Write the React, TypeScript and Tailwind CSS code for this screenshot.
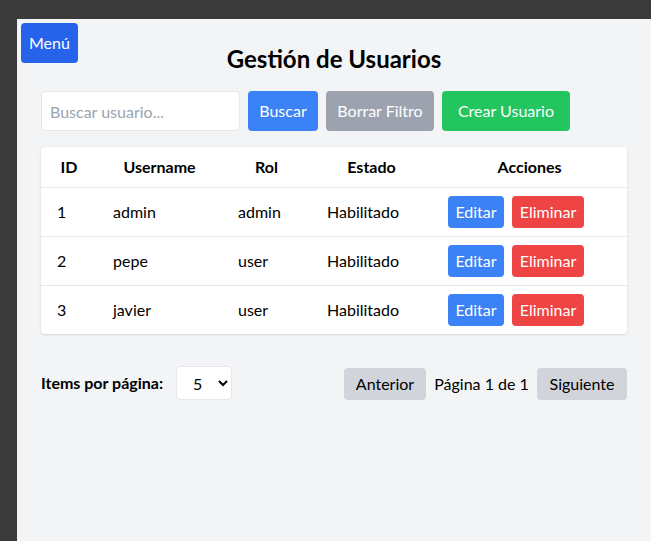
import React from "react";

const users = [
  { id: 1, username: "admin", rol: "admin", estado: "Habilitado" },
  { id: 2, username: "pepe", rol: "user", estado: "Habilitado" },
  { id: 3, username: "javier", rol: "user", estado: "Habilitado" },
];

export default function App() {
  return (
    <div
      className="w-[651px] h-[541px] bg-[#3a3a3a] pt-[19px] pl-[17px] overflow-hidden"
      style={{ fontFamily: "Lato, 'Liberation Sans', sans-serif" }}
    >
      <div className="relative w-full h-full bg-[#f3f4f6] p-6 text-black">
        <button className="absolute top-[4px] left-[4px] bg-[#2563eb] text-white px-2 py-2 rounded text-base leading-6">
          Menú
        </button>
        <h1 className="text-2xl font-bold text-center mb-4 leading-8">Gestión de Usuarios</h1>
        <div className="flex gap-2 mb-4">
          <input
            className="w-[199px] h-10 px-2 border border-[#e5e7eb] rounded bg-white placeholder-[#9ca3af] text-base"
            placeholder="Buscar usuario..."
          />
          <button className="bg-[#3b82f6] text-white w-[70px] rounded">Buscar</button>
          <button className="bg-[#9ca3af] text-white w-[108px] rounded">Borrar Filtro</button>
          <button className="bg-[#22c55e] text-white w-[128px] rounded">Crear Usuario</button>
        </div>
        <div className="bg-white rounded shadow overflow-hidden">
          <table className="w-full table-fixed border-collapse">
            <colgroup>
              <col className="w-[56px]" />
              <col className="w-[125px]" />
              <col className="w-[89px]" />
              <col className="w-[121px]" />
              <col />
            </colgroup>
            <thead>
              <tr className="border-b border-[#e5e7eb]">
                <th className="py-2 px-4 font-bold text-center leading-6">ID</th>
                <th className="py-2 px-4 font-bold text-center leading-6">Username</th>
                <th className="py-2 px-4 font-bold text-center leading-6">Rol</th>
                <th className="py-2 px-4 font-bold text-center leading-6">Estado</th>
                <th className="py-2 px-4 font-bold text-center leading-6">Acciones</th>
              </tr>
            </thead>
            <tbody>
              {users.map((u, i) => (
                <tr key={u.id} className={i < users.length - 1 ? "border-b border-[#e5e7eb]" : ""}>
                  <td className="py-2 px-4 leading-6">{u.id}</td>
                  <td className="py-2 px-4 leading-6">{u.username}</td>
                  <td className="py-2 px-4 leading-6">{u.rol}</td>
                  <td className="py-2 px-4 leading-6">{u.estado}</td>
                  <td className="py-2 px-4">
                    <div className="flex gap-2">
                      <button className="bg-[#3b82f6] text-white w-[56px] py-1 rounded leading-6">Editar</button>
                      <button className="bg-[#ef4444] text-white w-[72px] py-1 rounded leading-6">Eliminar</button>
                    </div>
                  </td>
                </tr>
              ))}
            </tbody>
          </table>
        </div>
        <div className="flex justify-between items-end mt-8">
          <div className="flex items-center">
            <span className="font-bold w-[127px] mr-2">Items por página:</span>
            <select className="w-[56px] h-[34px] border border-[#e5e7eb] rounded bg-white pl-3 text-base">
              <option>5</option>
              <option>10</option>
              <option>20</option>
            </select>
          </div>
          <div className="flex items-center">
            <button className="bg-[#d1d5db] w-[82px] py-1 rounded leading-6">Anterior</button>
            <span className="w-[111px] text-center">Página 1 de 1</span>
            <button className="bg-[#d1d5db] w-[90px] py-1 rounded leading-6">Siguiente</button>
          </div>
        </div>
      </div>
    </div>
  );
}
